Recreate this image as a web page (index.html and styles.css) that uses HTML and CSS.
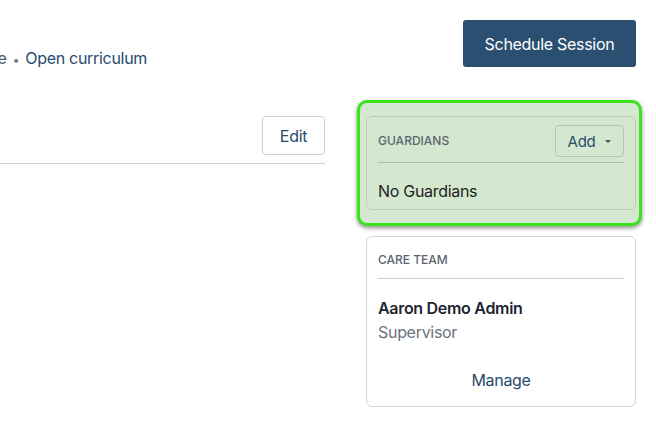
FILE: index.html
```html
<!DOCTYPE html>
<html lang="en">
<head>
    <meta charset="UTF-8">
    <meta name="viewport" content="width=device-width, initial-scale=1.0">
    <title>Program</title>
    <link rel="stylesheet" href="styles.css">
</head>
<body>
    <header class="top">
        <p class="meta">
            <span class="meta-type">Online</span>
            <span class="dot">•</span>
            <a href="#" class="meta-link">Open curriculum</a>
        </p>
        <button class="primary-button">Schedule Session</button>
    </header>

    <div class="layout">
        <!-- Main column -->
        <main class="main">
            <div class="section-head">
                <button class="outline-button">Edit</button>
            </div>
        </main>

        <!-- Sidebar -->
        <aside class="sidebar">
            <div class="highlight">
                <div class="card card-tinted">
                    <div class="card-head card-head-action">
                        <h3 class="card-title">Guardians</h3>
                        <button class="add-button">Add <span class="caret"></span></button>
                    </div>
                    <p class="empty">No Guardians</p>
                </div>
            </div>

            <div class="card care-card">
                <div class="card-head">
                    <h3 class="card-title">Care Team</h3>
                </div>
                <div class="member">
                    <div class="member-name">Aaron Demo Admin</div>
                    <div class="member-role">Supervisor</div>
                </div>
                <a href="#" class="manage-link">Manage</a>
            </div>
        </aside>
    </div>
</body>
</html>
```

FILE: styles.css
```css
body {
    font-family: Inter, "Noto Sans", sans-serif;
    margin: 0;
    padding: 0;
    background-color: #ffffff;
    color: #222;
    letter-spacing: -0.3px;
}
button {
    font-family: inherit;
    letter-spacing: inherit;
    cursor: pointer;
}
.top {
    display: flex;
    justify-content: space-between;
    align-items: flex-start;
    height: 67px;
    padding: 20px 20px 0 0;
    box-sizing: border-box;
}
.meta {
    margin: 27px 0 0 -40px;
    font-size: 16px;
    line-height: 22px;
    white-space: nowrap;
    color: #4a5a6a;
}
.dot {
    color: #777;
    font-size: 12px;
    margin: 0 2px;
}
.meta-link {
    color: #274b6e;
    text-decoration: none;
}
.primary-button {
    width: 173px;
    height: 47px;
    border: none;
    border-radius: 3px;
    background-color: #2a4f71;
    color: white;
    font-size: 16px;
}
.layout {
    display: flex;
    gap: 41px;
    padding: 33px 20px 0 0;
}
.main {
    flex: 1;
}
.section-head {
    display: flex;
    justify-content: flex-end;
    padding-top: 16px;
    padding-bottom: 8px;
    border-bottom: 1px solid #d0d0d0;
}
.outline-button {
    width: 63px;
    height: 39px;
    border: 1px solid #cfcfcf;
    border-radius: 4px;
    background: white;
    color: #274b6e;
    font-size: 16px;
}
.sidebar {
    width: 270px;
    display: flex;
    flex-direction: column;
}
.highlight {
    margin: 0 -6px 10px -9px;
    padding: 13px 3px 13px 6px;
    border: 3px solid #3ae31c;
    border-radius: 10px;
    background-color: #d3e8cf;
    box-shadow: 0 2px 4px rgba(0, 0, 0, 0.45);
}
.card {
    border: 1px solid #d4d4d4;
    border-radius: 6px;
    padding: 0 11px;
    background: white;
}
.card-tinted {
    background: transparent;
    border-color: #b9cdb5;
}
.card-head {
    display: flex;
    justify-content: space-between;
    align-items: center;
    padding: 14px 0 9px;
    border-bottom: 1px solid #cfcfcf;
}
.card-tinted .card-head {
    border-bottom-color: #a9bea5;
}
.card-head-action {
    padding: 8px 0 5px;
}
.card-title {
    margin: 0;
    font-size: 12px;
    line-height: 18px;
    font-weight: 500;
    letter-spacing: 0;
    text-transform: uppercase;
    color: #5c6470;
}
.add-button {
    width: 69px;
    height: 32px;
    border: 1px solid #b2c8ae;
    border-radius: 4px;
    background: transparent;
    color: #2b4f6a;
    font-size: 15px;
    display: flex;
    align-items: center;
    justify-content: center;
    gap: 10px;
    padding: 0;
}
.caret {
    width: 0;
    height: 0;
    border-left: 3px solid transparent;
    border-right: 3px solid transparent;
    border-top: 3px solid #3d5060;
}
.empty {
    margin: 0;
    padding: 16px 0 6px;
    font-size: 16px;
    line-height: 24px;
    color: #222;
}
.member {
    padding-top: 18px;
}
.member-name {
    font-size: 16px;
    line-height: 22px;
    font-weight: 600;
    color: #1e2530;
}
.member-role {
    margin-top: 2px;
    font-size: 16px;
    line-height: 22px;
    color: #6b7280;
}
.manage-link {
    display: block;
    margin-top: 25px;
    padding-bottom: 14px;
    text-align: center;
    font-size: 16px;
    line-height: 24px;
    color: #274b6e;
    text-decoration: none;
}
```
